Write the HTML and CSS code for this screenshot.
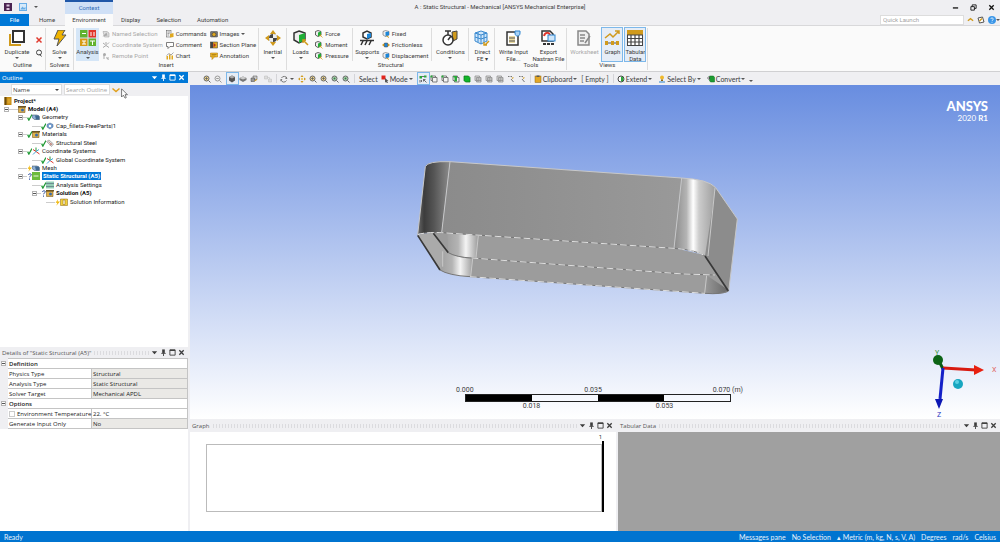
FILE: index.html
```html
<!DOCTYPE html>
<html lang="en">

<head>
  <meta charset="UTF-8">
  <meta name="viewport" content="width=device-width, initial-scale=1.0">
  <title>A : Static Structural - Mechanical [ANSYS Mechanical Enterprise]</title>
  <link rel="stylesheet" href="styles.css">
</head>

<body>
  <!-- Icon set -->
  <svg class="icon-set" aria-hidden="true">
    <symbol id="app" viewBox="0 0 16 16"><rect width="16" height="16" fill="#4a2350"/><path d="M5 3h6v4H5zM5 14v-4h6v4" fill="#d9c4dc"/></symbol>
    <symbol id="save" viewBox="0 0 16 16"><rect x="1" y="1" width="14" height="14" fill="#d6eafa" stroke="#6aaee6" stroke-width="2"/><path d="M3 12l4-5 3 3 3-2v5H3z" fill="#6aaee6"/></symbol>
    <symbol id="duplicate" viewBox="0 0 16 16"><path d="M1 4v11h11" fill="none" stroke="#d09a1c" stroke-width="2"/><rect x="4" y="1" width="11" height="11" fill="#fff" stroke="#333" stroke-width="2"/></symbol>
    <symbol id="cross" viewBox="0 0 16 16"><path d="M3 3l10 10M13 3L3 13" stroke="#e03a2e" stroke-width="3"/></symbol>
    <symbol id="find" viewBox="0 0 16 16"><circle cx="8" cy="7" r="5" fill="none" stroke="#444" stroke-width="2"/><path d="M9 10l4 5" stroke="#444" stroke-width="2"/></symbol>
    <symbol id="bolt" viewBox="0 0 16 16"><path d="M6 0h7l-3 5h4L5 16l2-7H2z" fill="#f0b400" stroke="#555" stroke-width="1"/></symbol>
    <symbol id="analysis" viewBox="0 0 16 16"><path fill="#62b22f" d="M0 0h7.500v7.500H0zM8.500 8.500H16V16H8.500z"/><path fill="#e0362c" d="M8.500 0H16v7.500H8.500z"/><path fill="#d79b14" d="M0 8.500h7.500V16H0z"/><path d="M2 3.500h4M11 2v4M14 2v4M2 11h4M4 11v3M2 14h4M10 11h5M12.500 11v4" stroke="#fff" fill="none"/></symbol>
    <symbol id="named" viewBox="0 0 16 16"><path d="M2 3h8l4 3v8H5z" fill="#ddd" stroke="#999"/><path d="M1 13l8-8 2 6z" fill="#aaa"/></symbol>
    <symbol id="axes-grey" viewBox="0 0 16 16"><path d="M8 9V2M8 9l6 4M8 9l-6 4M2 4l4 3M14 3l-4 4" stroke="#aaa" stroke-width="2" fill="none"/></symbol>
    <symbol id="remote" viewBox="0 0 16 16"><circle cx="5" cy="5" r="3" fill="#aaa"/><path d="M4 14V6M8 11l5 4M12 10v5" stroke="#aaa" stroke-width="2"/></symbol>
    <symbol id="commands" viewBox="0 0 16 16"><rect x="1" y="1" width="9" height="13" fill="#eee" stroke="#555"/><path d="M3 4h5M3 7h4M3 10h3" stroke="#555"/><path d="M8 8l7-2v8l-7 1z" fill="#e0a81f"/></symbol>
    <symbol id="comment" viewBox="0 0 16 16"><path d="M1 3h14v8H8l-4 4v-4H1z" fill="#fff" stroke="#555" stroke-width="1.500"/></symbol>
    <symbol id="chart" viewBox="0 0 16 16"><path d="M1 15V8h3v7M6 15V5h3v10M11 15v-8h3v8" fill="#e0a81f"/><path d="M1 7l5-4 4 3 5-5" fill="none" stroke="#555"/></symbol>
    <symbol id="images" viewBox="0 0 16 16"><rect x="1" y="3" width="14" height="11" rx="1" fill="#777" stroke="#444"/><circle cx="8" cy="9" r="4" fill="#e0a81f" stroke="#333"/></symbol>
    <symbol id="section" viewBox="0 0 16 16"><rect x="1" y="2" width="14" height="12" fill="#e0a81f" stroke="#333"/><path d="M1 2h5v12H1z" fill="#444"/><path d="M7 4l5 4-5 5z" fill="#b02a20"/></symbol>
    <symbol id="note" viewBox="0 0 16 16"><path d="M1 2h14v8H9l-5 5v-5H1z" fill="#f2bd2c" stroke="#a36b00"/><path d="M3 5h10M3 8h8" stroke="#7a5200"/></symbol>
    <symbol id="inertial" viewBox="0 0 16 16"><path d="M8 0l3 4H5zM8 16l3-4H5zM0 8l4-3v6zM16 8l-4-3v6z" fill="#d09a1c"/><circle cx="8" cy="8" r="4" fill="#444"/><path d="M8 4a4 4 0 0 1 4 4H8zM8 12a4 4 0 0 1-4-4h4z" fill="#eee"/></symbol>
    <symbol id="loads" viewBox="0 0 16 16"><path d="M6 1l6 2v7l-6 3-5-3V3z" fill="#eee" stroke="#333" stroke-width="1.500"/><path d="M6 5l6-2v7l-6 3z" fill="#1fae36"/><path d="M10 10l5 5M10 13v-3h3" stroke="#d09a1c" stroke-width="1.500" fill="none"/></symbol>
    <symbol id="supports" viewBox="0 0 16 16"><path d="M4 7V3l4-2 4 2v4l-4 2z" fill="#fff" stroke="#333" stroke-width="1.500"/><path d="M8 4l4-1v4L8 9z" fill="#1c86d8"/><path d="M1 10.500h14M4 11l-2 4M8 11l-2 4M12 11l-2 4" stroke="#333" stroke-width="1.500"/></symbol>
    <symbol id="fixed" viewBox="0 0 16 16"><path d="M7 1l7 2v7l-7 3-5-3V3z" fill="#eee" stroke="#444"/><path d="M7 4l7-1v7l-7 3z" fill="#1c86d8"/><path d="M9 12l5 3" stroke="#d09a1c" stroke-width="2"/></symbol>
    <symbol id="slide" viewBox="0 0 16 16"><path d="M0 8l5-4v8zM16 8l-5-4v8z" fill="#d09a1c"/><path d="M5 4h6v8H5z" fill="#1c86d8" stroke="#444"/></symbol>
    <symbol id="conditions" viewBox="0 0 16 16"><path d="M10 2l5-1v8l-4 2z" fill="#d09a1c" stroke="#444"/><circle cx="6" cy="10" r="5" fill="#fff" stroke="#333" stroke-width="1.500"/><path d="M3 1h6M6 1v4M6 10l3-4" stroke="#333" stroke-width="1.500"/></symbol>
    <symbol id="mesh" viewBox="0 0 16 16"><path d="M7 1l6 2v8l-6 3-6-3V3z" fill="#cfe6fa" stroke="#3b8ad0"/><path d="M1 3l6 2 6-2M7 5v9M1 7l6 2 6-2M4 2v10M10 2v10" stroke="#3b8ad0" fill="none"/><path d="M15 11l-4 4M10 12v3h3" stroke="#d09a1c" stroke-width="1.500" fill="none"/></symbol>
    <symbol id="write" viewBox="0 0 16 16"><path d="M2 2h8l3 3v10H2z" fill="#fff" stroke="#333" stroke-width="1.500"/><path d="M4 6h6v7H4z" fill="#e9d9a0"/><path d="M4 8h6M4 11h6" stroke="#555"/><path d="M10 1h5v2c0 2-1 3-2.500 3S10 5 10 3z" fill="#a9d2f4" stroke="#2b83cf"/></symbol>
    <symbol id="export" viewBox="0 0 16 16"><path d="M2 1h8l3 3v7H2z" fill="#fff" stroke="#333" stroke-width="1.500"/><path d="M4 6c1-4 5-4 6-1" stroke="#e0362c" stroke-width="2" fill="none"/><rect x="8" y="5" width="7" height="6" fill="#cfe6fa" stroke="#2b83cf"/><path d="M3 14h12" stroke="#333" stroke-width="2" stroke-dasharray="3 1"/></symbol>
    <symbol id="worksheet" viewBox="0 0 16 16"><path d="M2 1h8l3 3v11H2z" fill="#eee" stroke="#888" stroke-width="1.500"/><path d="M4 5h5M4 8h5M4 11h4M14 6l-5 7" stroke="#888" stroke-width="1.500"/></symbol>
    <symbol id="graph" viewBox="0 0 16 16"><path d="M1 8l5-4 3 3 6-6M11 1h4v3" fill="none" stroke="#d09a1c" stroke-width="1.500"/><path d="M1 13h14" stroke="#555"/><path d="M1 11h3v4H1zM7 11h3v4H7zM12 11h3v4h-3z" fill="#d09a1c"/></symbol>
    <symbol id="table" viewBox="0 0 16 16"><rect x=".500" y=".500" width="15" height="15" fill="#fff" stroke="#444"/><path d="M0 0h16v5H0z" fill="#d09a1c"/><path d="M0 5h16M0 8.500h16M0 12h16M4 5v11M8 5v11M12 5v11" stroke="#444" stroke-width="1.200"/></symbol>
    <symbol id="zoom-in" viewBox="0 0 16 16"><circle cx="7" cy="7" r="5" fill="#f5d98a" stroke="#666" stroke-width="2"/><path d="M11 11l4 4M4.500 7h5M7 4.500v5" stroke="#666" stroke-width="2"/></symbol>
    <symbol id="zoom-grey" viewBox="0 0 16 16"><circle cx="7" cy="7" r="5" fill="#eee" stroke="#999" stroke-width="2"/><path d="M11 11l4 4M4.500 7h5" stroke="#999" stroke-width="2"/></symbol>
    <symbol id="zoom-green" viewBox="0 0 16 16"><circle cx="7" cy="7" r="5" fill="#bde2bd" stroke="#666" stroke-width="2"/><path d="M5 5h4v4H5z" fill="#3a7a48"/><path d="M11 11l4 4" stroke="#666" stroke-width="2"/></symbol>
    <symbol id="cube" viewBox="0 0 16 16"><path d="M8 1l6 3v7l-6 4-6-4V4z" fill="#555"/><path d="M8 1l6 3-6 3-6-3z" fill="#aaa"/></symbol>
    <symbol id="cube-flat" viewBox="0 0 16 16"><path d="M8 3l7 3v4l-7 4-7-4V6z" fill="#777"/><path d="M8 3l7 3-7 3-7-3z" fill="#ccc"/></symbol>
    <symbol id="cubes" viewBox="0 0 16 16"><path d="M6 2h8v7H6z" fill="#ccc" stroke="#444"/><path d="M2 6h7v7H2z" fill="#999" stroke="#444"/><path d="M9 12l5-3" stroke="#d09a1c" stroke-width="2"/></symbol>
    <symbol id="copy-grey" viewBox="0 0 16 16"><path d="M1 2h6v6H1zM9 8h6v6H9z" fill="#ddd" stroke="#bbb"/><path d="M7 5h4v3" stroke="#bbb" fill="none"/></symbol>
    <symbol id="rotate" viewBox="0 0 16 16"><path d="M3 6a6 6 0 0 1 11 1M13 11a6 6 0 0 1-11-1" fill="none" stroke="#777" stroke-width="2"/><path d="M14 3v5h-4zM1 13V8h4z" fill="#777"/></symbol>
    <symbol id="pan" viewBox="0 0 16 16"><path d="M8 0l3 4H5zM8 16l3-4H5zM0 8l4-3v6zM16 8l-4-3v6z" fill="#d09a1c"/><path d="M6 6h4v4H6z" fill="#eacb6b"/></symbol>
    <symbol id="pointer-red" viewBox="0 0 16 16"><path d="M1 1h8v8H1z" fill="#e0241c"/><path d="M8 6l7 6-3 .500 2 3-2 1-2-3-2 2z" fill="#555"/></symbol>
    <symbol id="pick" viewBox="0 0 16 16"><path d="M1 2h5v5H1zM10 1h5v4h-5z" fill="#2aa83a"/><path d="M6 3h4M2 10v5M5 10v4M9 9l6 6M9 13V9h4" stroke="#444" stroke-width="1.500" fill="none"/></symbol>
    <symbol id="sel-vertex" viewBox="0 0 16 16"><path d="M2 2h9v3h3v9H5v-3H2zM5 5h6M5 5v6" fill="#f4f4f4" stroke="#555" stroke-width="1.500"/><path d="M1 1h4v4H1z" fill="#2aa83a"/></symbol>
    <symbol id="sel-face" viewBox="0 0 16 16"><path d="M2 2h9v3h3v9H5v-3H2z" fill="#f4f4f4" stroke="#555" stroke-width="1.500"/><path d="M5 5h5v8H5zM2 2h8v3H3z" fill="#2aa83a"/></symbol>
    <symbol id="sel-body" viewBox="0 0 16 16"><path d="M2 2h9l3 3v9H5l-3-3z" fill="#12b52a" stroke="#0b7a1a" stroke-width="1.500"/></symbol>
    <symbol id="sel-node" viewBox="0 0 16 16"><path d="M2 2h9v3h3v9H5v-3H2zM5 5h6M5 5v6M8 8h6M8 5v9M5 11h9" fill="#ddd" stroke="#888" stroke-width="1.500"/></symbol>
    <symbol id="probe" viewBox="0 0 16 16"><path d="M2 3h3M7 3h3M8 8l5 6" stroke="#777" stroke-width="2"/><path d="M9 5h5l-3 3z" fill="#d09a1c"/></symbol>
    <symbol id="clipboard" viewBox="0 0 16 16"><rect x="2" y="2" width="12" height="13" fill="#e3a726" stroke="#8a6310"/><path d="M5 1h6v3H5z" fill="#555"/></symbol>
    <symbol id="extend" viewBox="0 0 16 16"><circle cx="8" cy="8" r="6" fill="#fff" stroke="#444" stroke-width="2"/><path d="M8 3a5 5 0 0 1 0 10z" fill="#2aa83a"/></symbol>
    <symbol id="select-by" viewBox="0 0 16 16"><circle cx="8" cy="5" r="4" fill="#f0b92c"/><path d="M6 9h4v3H6z" fill="#8a6310"/><path d="M2 14h12" stroke="#2b83cf" stroke-width="2"/></symbol>
    <symbol id="convert" viewBox="0 0 16 16"><path d="M5 2h8l2 3v9H7l-2-3z" fill="#1d9c33" stroke="#0b6a1a"/><path d="M0 6h6M3 3l3 3-3 3" stroke="#444" fill="none" stroke-width="1.500"/></symbol>
    <symbol id="project" viewBox="0 0 16 16"><path d="M1 0h14v16H1z" fill="#c58a12"/><path d="M1 0h4v16H1z" fill="#6b4b0a"/><path d="M7 3h6v10H7z" fill="#dba52c"/></symbol>
    <symbol id="box" viewBox="0 0 16 16"><path d="M1 4h13v11H1z" fill="#e0b04a" stroke="#6b4b0a"/><path d="M0 2h16v3H0z" fill="#6b5424"/><circle cx="9" cy="10" r="3" fill="#3d6da8"/></symbol>
    <symbol id="geometry" viewBox="0 0 16 16"><path d="M0 4h10l5 3v6H5L0 9z" fill="#8fb0d6" stroke="#345"/><path d="M6 5h8v8H8z" fill="#40688f"/></symbol>
    <symbol id="part" viewBox="0 0 16 16"><path d="M8 2l6 3v5l-6 4-6-4V5z" fill="#7ba3d4" stroke="#3b5c86"/><path d="M6 6h4v4H6z" fill="#fff"/></symbol>
    <symbol id="steel" viewBox="0 0 16 16"><path d="M1 5l5-3 9 8-4 5z" fill="#ddd" stroke="#777"/><path d="M5 5l7 7M11 8l-3 5" stroke="#b04a3a"/></symbol>
    <symbol id="axes" viewBox="0 0 16 16"><path d="M8 9V1" stroke="#2a9a3a" stroke-width="2"/><path d="M8 9l7 5M8 9L2 5" stroke="#e0362c" stroke-width="2"/><path d="M8 9l-6 6M8 9l6-4" stroke="#3fa7d8" stroke-width="2"/></symbol>
    <symbol id="static" viewBox="0 0 16 16"><rect width="16" height="16" fill="#6cbb3c"/><path d="M3 8h10" stroke="#e8f5df" stroke-width="2"/></symbol>
    <symbol id="settings" viewBox="0 0 16 16"><path d="M2 1v14M6 1v14M10 1v14M14 1v14" stroke="#2a9a6a" stroke-width="2"/><path d="M0 5h16M0 11h16" stroke="#44506a" stroke-width="1"/></symbol>
    <symbol id="info" viewBox="0 0 16 16"><path d="M1 2h14v13H1z" fill="#f3d23c" stroke="#8a6310"/><path d="M6 4h4v9H6z" fill="#fffbe0" stroke="#8a6310"/></symbol>
    <symbol id="check" viewBox="0 0 8 12"><path d="M1 7l2 4 5-9" fill="none" stroke="#1f9a35" stroke-width="2"/></symbol>
    <symbol id="spark" viewBox="0 0 8 12"><path d="M5 1L1 7h3l-2 5 6-7H4z" fill="#f0b400"/></symbol>
    <symbol id="ask" viewBox="0 0 8 12"><path d="M2 4c1-2 5-2 5 0S4 6 4 8M4 10v2" fill="none" stroke="#274a9a" stroke-width="1.500"/></symbol>
    <symbol id="pin" viewBox="0 0 16 16"><path d="M5 1h6v8H5z" fill="currentColor"/><path d="M3 10h10M8 10v6" stroke="currentColor" stroke-width="2"/></symbol>
    <symbol id="frame" viewBox="0 0 16 16"><path d="M2 2h12v12H2z" fill="none" stroke="currentColor" stroke-width="2"/><path d="M2 3h12" stroke="currentColor" stroke-width="3"/></symbol>
    <symbol id="close" viewBox="0 0 16 16"><path d="M3 3l10 10M13 3L3 13" stroke="currentColor" stroke-width="3"/></symbol>
    <symbol id="min" viewBox="0 0 16 16"><path d="M2 9h12" stroke="currentColor" stroke-width="3"/></symbol>
    <symbol id="restore" viewBox="0 0 16 16"><path d="M2 6h8v8H2zM5 6V2h9v8h-4" fill="none" stroke="currentColor" stroke-width="2"/></symbol>
    <symbol id="drop" viewBox="0 0 16 16"><path d="M2 5h12l-6 7z" fill="currentColor"/></symbol>
    <symbol id="up" viewBox="0 0 16 16"><path d="M2 11l6-5 6 5" fill="none" stroke="#d09a1c" stroke-width="3"/></symbol>
    <symbol id="down" viewBox="0 0 16 16"><path d="M1 5l7 6 7-6" fill="none" stroke="#e0a01c" stroke-width="3"/></symbol>
    <symbol id="layout" viewBox="0 0 16 16"><path d="M2 4l9-2 3 10-9 2z" fill="#fff" stroke="#555" stroke-width="2"/><path d="M5 10l5-5" stroke="#d09a1c" stroke-width="3"/></symbol>
    <symbol id="help" viewBox="0 0 16 16"><circle cx="8" cy="8" r="8" fill="#3a96e8"/><path d="M5.500 6c0-3 5-3 5 0S8 8 8 10M8 11.500v2" fill="none" stroke="#fff" stroke-width="1.500"/></symbol>
  </svg>

  <div class="app">
    <!-- Title bar and tabs -->
    <header class="top">
      <div class="title-bar">
        <div class="quick">
          <svg class="ic"><use href="#app"/></svg>
          <button aria-label="Save"><svg class="ic"><use href="#save"/></svg></button>
          <button class="caret" aria-label="More"></button>
        </div>
        <div class="context-label">Context</div>
        <h1>A : Static Structural - Mechanical [ANSYS Mechanical Enterprise]</h1>
        <div class="window-buttons">
          <button aria-label="Minimize"><svg class="ic-s"><use href="#min"/></svg></button>
          <button aria-label="Restore"><svg class="ic-s"><use href="#restore"/></svg></button>
          <button aria-label="Close"><svg class="ic-s"><use href="#close"/></svg></button>
        </div>
      </div>
      <div class="tab-bar">
        <nav class="tabs">
          <button class="file">File</button>
          <button class="home">Home</button>
          <button class="active">Environment</button>
          <button>Display</button>
          <button>Selection</button>
          <button>Automation</button>
        </nav>
        <div class="launch">
          <input type="text" placeholder="Quick Launch" aria-label="Quick Launch">
          <button aria-label="Collapse ribbon"><svg class="ic-s"><use href="#up"/></svg></button>
          <button aria-label="Layout"><svg class="ic"><use href="#layout"/></svg></button>
          <button aria-label="Help"><svg class="ic"><use href="#help"/></svg><span class="caret"></span></button>
        </div>
      </div>
    </header>

    <!-- Ribbon -->
    <div class="ribbon">
      <section class="group">
        <div class="tools">
          <button class="big"><svg><use href="#duplicate"/></svg>Duplicate<span class="caret"></span></button>
          <div class="list mini">
            <button aria-label="Delete"><svg class="ic"><use href="#cross"/></svg></button>
            <button aria-label="Find"><svg class="ic"><use href="#find"/></svg></button>
          </div>
        </div>
        <h2>Outline</h2>
      </section>
      <section class="group">
        <div class="tools">
          <button class="big narrow"><svg><use href="#bolt"/></svg>Solve<span class="caret"></span></button>
        </div>
        <h2>Solvers</h2>
      </section>
      <section class="group">
        <div class="tools">
          <button class="big narrow lit"><svg><use href="#analysis"/></svg>Analysis<span class="caret"></span></button>
          <div class="list">
            <button disabled><svg class="ic"><use href="#named"/></svg>Named Selection</button>
            <button disabled><svg class="ic"><use href="#axes-grey"/></svg>Coordinate System</button>
            <button disabled><svg class="ic"><use href="#remote"/></svg>Remote Point</button>
          </div>
          <div class="list">
            <button><svg class="ic"><use href="#commands"/></svg>Commands</button>
            <button><svg class="ic"><use href="#comment"/></svg>Comment</button>
            <button><svg class="ic"><use href="#chart"/></svg>Chart</button>
          </div>
          <div class="list">
            <button><svg class="ic"><use href="#images"/></svg>Images<span class="caret"></span></button>
            <button><svg class="ic"><use href="#section"/></svg>Section Plane</button>
            <button><svg class="ic"><use href="#note"/></svg>Annotation</button>
          </div>
        </div>
        <h2>Insert</h2>
      </section>
      <section class="group">
        <div class="tools">
          <button class="big narrow"><svg><use href="#inertial"/></svg>Inertial<span class="caret"></span></button>
        </div>
      </section>
      <section class="group">
        <div class="tools">
          <button class="big narrow"><svg><use href="#loads"/></svg>Loads<span class="caret"></span></button>
          <div class="list">
            <button><svg class="ic"><use href="#loads"/></svg>Force</button>
            <button><svg class="ic"><use href="#loads"/></svg>Moment</button>
            <button><svg class="ic"><use href="#loads"/></svg>Pressure</button>
          </div>
          <div class="split"></div>
          <button class="big narrow"><svg><use href="#supports"/></svg>Supports<span class="caret"></span></button>
          <div class="list">
            <button><svg class="ic"><use href="#fixed"/></svg>Fixed</button>
            <button><svg class="ic"><use href="#slide"/></svg>Frictionless</button>
            <button><svg class="ic"><use href="#fixed"/></svg>Displacement</button>
          </div>
          <div class="split"></div>
          <button class="big"><svg><use href="#conditions"/></svg>Conditions<span class="caret"></span></button>
          <div class="split"></div>
          <button class="big slim"><svg><use href="#mesh"/></svg>Direct<br>FE ▾</button>
        </div>
        <h2>Structural</h2>
      </section>
      <section class="group">
        <div class="tools">
          <button class="big wide"><svg><use href="#write"/></svg>Write Input<br>File...</button>
          <button class="big wide"><svg><use href="#export"/></svg>Export<br>Nastran File</button>
        </div>
        <h2>Tools</h2>
      </section>
      <section class="group">
        <div class="tools">
          <button class="big" disabled><svg><use href="#worksheet"/></svg>Worksheet</button>
          <button class="big slim on"><svg><use href="#graph"/></svg>Graph</button>
          <button class="big slim on"><svg><use href="#table"/></svg>Tabular<br>Data</button>
        </div>
        <h2>Views</h2>
      </section>
    </div>

    <main class="work">
      <div class="side">
        <!-- Outline -->
        <section class="outline">
          <div class="panel-head blue">
            <h3>Outline</h3>
            <span class="fill"></span>
            <button aria-label="Menu"><svg class="ic-s"><use href="#drop"/></svg></button>
            <button aria-label="Pin"><svg class="ic-s"><use href="#pin"/></svg></button>
            <button aria-label="Maximize"><svg class="ic-s"><use href="#frame"/></svg></button>
            <button aria-label="Close"><svg class="ic-s"><use href="#close"/></svg></button>
          </div>
          <div class="search">
            <span class="grip"></span>
            <label class="picker"><select aria-label="Search by"><option>Name</option></select></label>
            <input type="text" placeholder="Search Outline" aria-label="Search Outline">
            <button aria-label="Expand"><svg class="ic"><use href="#down"/></svg></button>
          </div>
          <div class="tree">
            <div class="row root"><svg class="ic"><use href="#project"/></svg><b>Project*</b></div>
            <ul>
              <li>
                <div class="row"><i class="toggle"></i><i class="wire"></i><svg class="ic"><use href="#box"/></svg><b>Model (A4)</b></div>
                <ul>
                  <li>
                    <div class="row"><i class="toggle"></i><i class="wire"></i><svg class="st"><use href="#check"/></svg><svg class="ic"><use href="#geometry"/></svg><span>Geometry</span></div>
                    <ul>
                      <li><div class="row"><i class="wire leaf"></i><svg class="st"><use href="#check"/></svg><svg class="ic"><use href="#part"/></svg><span>Cap_fillets-FreeParts|1</span></div></li>
                    </ul>
                  </li>
                  <li>
                    <div class="row"><i class="toggle"></i><i class="wire"></i><svg class="st"><use href="#check"/></svg><svg class="ic"><use href="#box"/></svg><span>Materials</span></div>
                    <ul>
                      <li><div class="row"><i class="wire leaf"></i><svg class="st"><use href="#check"/></svg><svg class="ic"><use href="#steel"/></svg><span>Structural Steel</span></div></li>
                    </ul>
                  </li>
                  <li>
                    <div class="row"><i class="toggle"></i><i class="wire"></i><svg class="st"><use href="#check"/></svg><svg class="ic"><use href="#axes"/></svg><span>Coordinate Systems</span></div>
                    <ul>
                      <li><div class="row"><i class="wire leaf"></i><svg class="st"><use href="#check"/></svg><svg class="ic"><use href="#axes"/></svg><span>Global Coordinate System</span></div></li>
                    </ul>
                  </li>
                  <li><div class="row"><i class="wire leaf"></i><svg class="st"><use href="#spark"/></svg><svg class="ic"><use href="#geometry"/></svg><span>Mesh</span></div></li>
                  <li>
                    <div class="row"><i class="toggle"></i><i class="wire"></i><svg class="st"><use href="#ask"/></svg><svg class="ic"><use href="#static"/></svg><b class="selected">Static Structural (A5)</b></div>
                    <ul>
                      <li><div class="row"><i class="wire leaf"></i><svg class="st"><use href="#check"/></svg><svg class="ic"><use href="#settings"/></svg><span>Analysis Settings</span></div></li>
                      <li>
                        <div class="row"><i class="toggle"></i><i class="wire"></i><svg class="st"><use href="#ask"/></svg><svg class="ic"><use href="#box"/></svg><b>Solution (A5)</b></div>
                        <ul>
                          <li><div class="row"><i class="wire leaf"></i><svg class="st"><use href="#spark"/></svg><svg class="ic"><use href="#info"/></svg><span>Solution Information</span></div></li>
                        </ul>
                      </li>
                    </ul>
                  </li>
                </ul>
              </li>
            </ul>
          </div>
          <svg class="mouse" viewBox="0 0 12 18"><path d="M1 1v14l3-3 3 5 2-1-2-5h4z" fill="#fff" stroke="#222"/></svg>
        </section>

        <!-- Details -->
        <section class="details">
          <div class="panel-head">
            <h3>Details of "Static Structural (A5)"</h3>
            <span class="fill"></span>
            <button aria-label="Menu"><svg class="ic-s"><use href="#drop"/></svg></button>
            <button aria-label="Pin"><svg class="ic-s"><use href="#pin"/></svg></button>
            <button aria-label="Maximize"><svg class="ic-s"><use href="#frame"/></svg></button>
            <button aria-label="Close"><svg class="ic-s"><use href="#close"/></svg></button>
          </div>
          <table>
            <colgroup><col class="col-gutter"><col class="col-name"><col></colgroup>
            <tr><td class="gutter"><i class="toggle"></i></td><th colspan="2">Definition</th></tr>
            <tr><td class="gutter"></td><td>Physics Type</td><td class="locked">Structural</td></tr>
            <tr><td class="gutter"></td><td>Analysis Type</td><td class="locked">Static Structural</td></tr>
            <tr><td class="gutter"></td><td>Solver Target</td><td class="locked">Mechanical APDL</td></tr>
            <tr><td class="gutter"><i class="toggle"></i></td><th colspan="2">Options</th></tr>
            <tr><td class="gutter"></td><td><label><input type="checkbox">Environment Temperature</label></td><td>22. °C</td></tr>
            <tr><td class="gutter"></td><td>Generate Input Only</td><td class="locked">No</td></tr>
          </table>
        </section>
      </div>

      <div class="stage">
        <!-- Graphics toolbar -->
        <div class="toolbar">
          <span class="grip"></span>
          <button aria-label="Zoom in"><svg class="ic"><use href="#zoom-in"/></svg></button>
          <button aria-label="Zoom out"><svg class="ic"><use href="#zoom-grey"/></svg></button>
          <button class="on gap" aria-label="Shaded"><svg class="ic"><use href="#cube"/></svg></button>
          <button aria-label="Wireframe"><svg class="ic"><use href="#cube-flat"/></svg></button>
          <button aria-label="Show mesh"><svg class="ic"><use href="#cubes"/></svg></button>
          <button class="gap" aria-label="Copy"><svg class="ic"><use href="#copy-grey"/></svg></button>
          <span class="rule"></span>
          <button aria-label="Rotate"><svg class="ic"><use href="#rotate"/></svg></button>
          <span class="caret"></span>
          <button class="gap" aria-label="Pan"><svg class="ic"><use href="#pan"/></svg></button>
          <button aria-label="Zoom"><svg class="ic"><use href="#zoom-in"/></svg></button>
          <button aria-label="Box zoom"><svg class="ic"><use href="#zoom-in"/></svg></button>
          <button aria-label="Fit"><svg class="ic"><use href="#zoom-green"/></svg></button>
          <button aria-label="Magnifier"><svg class="ic"><use href="#zoom-green"/></svg></button>
          <span class="rule"></span>
          <span class="word">Select</span>
          <button><svg class="ic"><use href="#pointer-red"/></svg>Mode<span class="caret"></span></button>
          <button class="on gap" aria-label="Single select"><svg class="ic"><use href="#pick"/></svg></button>
          <button aria-label="Vertex"><svg class="ic"><use href="#sel-vertex"/></svg></button>
          <button aria-label="Edge"><svg class="ic"><use href="#sel-vertex"/></svg></button>
          <button aria-label="Face"><svg class="ic"><use href="#sel-face"/></svg></button>
          <button aria-label="Body"><svg class="ic"><use href="#sel-body"/></svg></button>
          <button aria-label="Node"><svg class="ic"><use href="#sel-node"/></svg></button>
          <button aria-label="Element face"><svg class="ic"><use href="#sel-node"/></svg></button>
          <button aria-label="Element"><svg class="ic"><use href="#sel-node"/></svg></button>
          <button aria-label="Hit point"><svg class="ic"><use href="#probe"/></svg></button>
          <button aria-label="Coordinates"><svg class="ic"><use href="#probe"/></svg></button>
          <span class="rule"></span>
          <button><svg class="ic"><use href="#clipboard"/></svg>Clipboard<span class="caret"></span></button>
          <span class="word">[ Empty ]</span>
          <span class="rule"></span>
          <button><svg class="ic"><use href="#extend"/></svg>Extend<span class="caret"></span></button>
          <button class="gap"><svg class="ic"><use href="#select-by"/></svg>Select By<span class="caret"></span></button>
          <button class="gap"><svg class="ic"><use href="#convert"/></svg>Convert<span class="caret"></span></button>
          <span class="caret last"></span>
        </div>

        <!-- 3D view -->
        <div class="view">
          <svg class="model" viewBox="0 0 1050 465">
            <defs>
              <linearGradient id="left-round"><stop offset="0" stop-color="#6a6a6a"/><stop offset=".2" stop-color="#3c3c3c"/><stop offset=".5" stop-color="#555"/><stop offset="1" stop-color="#8c8c8c"/></linearGradient>
              <linearGradient id="front"><stop offset="0" stop-color="#8b8b8b"/><stop offset="1" stop-color="#999"/></linearGradient>
              <linearGradient id="right-round"><stop offset="0" stop-color="#8a8a8a"/><stop offset=".3" stop-color="#b4b4b4"/><stop offset=".46" stop-color="#fff"/><stop offset=".6" stop-color="#ccc"/><stop offset="1" stop-color="#9c9c9c"/></linearGradient>
              <linearGradient id="in-round"><stop offset="0" stop-color="#a0a0a0"/><stop offset=".35" stop-color="#b4b4b4"/><stop offset=".6" stop-color="#f4f4f4"/><stop offset="1" stop-color="#999"/></linearGradient>
              <linearGradient id="in-right"><stop offset="0" stop-color="#999"/><stop offset="1" stop-color="#666"/></linearGradient>
            </defs>
            <path d="M53 254L125 246L820 293L915 316L985 425Q965 434 915 430L210 380Q145 376 120 360z" fill="#9c9c9c"/>
            <path d="M53 254L100 248L145 308L128 355L120 360z" fill="#aaa"/>
            <path d="M142 248L235 254L228 324Q170 322 145 308z" fill="url(#in-round)"/>
            <path d="M132 304Q170 324 220 326L212 381Q145 376 122 360z" fill="url(#in-round)"/>
            <path d="M920 376L985 420Q970 434 914 430z" fill="url(#in-right)"/>
            <path d="M76 50Q82 33 150 35L125 248Q75 246 53 252z" fill="url(#left-round)"/>
            <path d="M150 35L845 84L822 295L125 248z" fill="url(#front)"/>
            <path d="M845 84Q925 88 947 113L922 322Q890 300 822 295z" fill="url(#right-round)"/>
            <path d="M947 113L1012 207L986 424L915 318z" fill="#8c8c8c"/>
            <path class="edge" d="M76 50Q82 33 150 35L845 84Q925 88 947 113L1012 207L986 424M76 50L53 254M150 35L125 248M845 84L822 295M945 113L924 318M235 256L228 324M218 326L212 380M128 304L128 350M920 376L914 430"/>
            <path class="dark" d="M53 256L120 360M100 250L145 308M915 318L985 423"/>
            <path class="dark thin" d="M120 360Q145 376 210 380L915 430Q965 434 985 423M145 308Q170 322 215 324L850 372L945 375M53 254Q75 246 125 248L822 295Q890 300 915 318"/>
            <path class="edge dash" d="M53 254Q75 246 125 248L822 295Q890 300 915 318M215 324L850 372L945 375M210 380L915 430"/>
          </svg>
          <div class="brand"><strong>ANSYS</strong><span>2020 <b>R1</b></span></div>
          <div class="ruler">
            <div class="marks upper"><span>0.000</span><span>0.035</span><span>0.070 (m)</span></div>
            <div class="bar"><i></i><i></i><i></i><i></i></div>
            <div class="marks lower"><span>0.018</span><span>0.053</span></div>
          </div>
          <svg class="triad" viewBox="0 0 70 70">
            <path d="M13 20L9 12" stroke="#0a5a14" stroke-width="3"/>
            <circle cx="8" cy="11" r="5" fill="#0c6416"/>
            <path d="M13 19L46 21" stroke="#d81a10" stroke-width="3"/>
            <path d="M44 16l10 5-10 5z" fill="#e8200f"/>
            <path d="M13 19L10 50" stroke="#1420c8" stroke-width="3"/>
            <path d="M5 50h8l-4 10z" fill="#0c17b4"/>
            <circle cx="28" cy="35" r="5" fill="#17a6c0"/>
            <circle cx="27" cy="33" r="2" fill="#5cd0e2"/>
            <text x="5" y="6" fill="#3a9a3a">Y</text>
            <text x="62" y="23" fill="#e0605a">X</text>
            <text x="7" y="68" fill="#2a34c0">Z</text>
          </svg>
        </div>

        <!-- Graph and tabular data -->
        <div class="bottom">
          <section class="graph-panel">
            <div class="panel-head">
              <h3>Graph</h3>
              <span class="fill"></span>
              <button aria-label="Menu"><svg class="ic-s"><use href="#drop"/></svg></button>
              <button aria-label="Pin"><svg class="ic-s"><use href="#pin"/></svg></button>
              <button aria-label="Maximize"><svg class="ic-s"><use href="#frame"/></svg></button>
              <button aria-label="Close"><svg class="ic-s"><use href="#close"/></svg></button>
            </div>
            <div class="plot-area">
              <span>1</span>
              <div class="plot"></div>
            </div>
          </section>
          <section class="data-panel">
            <div class="panel-head">
              <h3>Tabular Data</h3>
              <span class="fill"></span>
              <button aria-label="Menu"><svg class="ic-s"><use href="#drop"/></svg></button>
              <button aria-label="Pin"><svg class="ic-s"><use href="#pin"/></svg></button>
              <button aria-label="Maximize"><svg class="ic-s"><use href="#frame"/></svg></button>
              <button aria-label="Close"><svg class="ic-s"><use href="#close"/></svg></button>
            </div>
            <div class="data-area"></div>
          </section>
        </div>
      </div>
    </main>

    <!-- Status bar -->
    <footer class="status">
      <span class="ready">Ready</span>
      <span>Messages pane</span>
      <span>No Selection</span>
      <span class="units">Metric (m, kg, N, s, V, A)</span>
      <span>Degrees</span>
      <span>rad/s</span>
      <span>Celsius</span>
    </footer>
  </div>
</body>

</html>
```
FILE: styles.css
```css
* {
  box-sizing: border-box;
}

body {
  margin: 0;
  font-family: Roboto, "Noto Sans", sans-serif;
  font-size: 6px;
  line-height: 8px;
  color: #3c3c3c;
  background: #fff;
}

h1, h2, h3, ul {
  margin: 0;
  padding: 0;
  font-size: 6px;
  font-weight: normal;
}

ul {
  list-style: none;
}

button, input, select {
  font: inherit;
  color: inherit;
  margin: 0;
  padding: 0;
  border: none;
  border-radius: 0;
  background: none;
}

button {
  display: flex;
  align-items: center;
  white-space: nowrap;
}

svg {
  flex: none;
  display: block;
}

.icon-set {
  position: absolute;
  width: 0;
  height: 0;
}

.ic {
  width: 8px;
  height: 8px;
}

.ic-s {
  width: 7px;
  height: 7px;
}

.caret {
  border: 2px solid transparent;
  border-top-color: #555;
  border-bottom: none;
  width: 4px;
  height: 2px;
}

.app {
  display: flex;
  flex-direction: column;
  height: 100vh;
  overflow: hidden;
}

/* Title bar */
.top {
  background: #efeff2;
}

.title-bar {
  display: flex;
  align-items: center;
  height: 14px;
}

.quick {
  display: flex;
  align-items: center;
  gap: 4px;
  width: 65px;
  padding-left: 4px;
}

.quick .ic {
  margin-right: 3px;
}

.context-label {
  width: 48px;
  height: 14px;
  line-height: 12px;
  border-top: 2px solid #1f57a8;
  background: #cfe0f6;
  color: #2b6cb8;
  text-align: center;
}

.title-bar h1 {
  flex: 1;
  padding-right: 65px;
  text-align: center;
}

.window-buttons {
  display: flex;
  gap: 11px;
  padding-right: 5px;
  color: #111;
}

.tab-bar {
  display: flex;
  justify-content: space-between;
  height: 12px;
  border-bottom: 1px solid #d8d8da;
}

.tabs {
  display: flex;
}

.tabs button {
  justify-content: center;
  height: 12px;
  padding: 0 8px;
}

.tabs .file {
  width: 29px;
  background: #0078d7;
  color: #fff;
}

.tabs .home {
  width: 36px;
}

.tabs .active {
  width: 48px;
  padding: 0;
  background: #fafafa;
}

.launch {
  display: flex;
  align-items: center;
  gap: 3px;
}

.launch input {
  width: 84px;
  height: 10px;
  padding: 0 2px;
  border: 1px solid #ddd;
  background: #fff;
}

input::placeholder {
  color: #a4a4a4;
}

/* Ribbon */
.ribbon {
  display: flex;
  height: 46px;
  padding-top: 2px;
  background: #fafafa;
  border-bottom: 1px solid #d0d0d2;
}

.group {
  display: flex;
  flex-direction: column;
  height: 42px;
  padding: 0 2px;
  border-right: 1px solid #ddd;
}

.group h2 {
  text-align: center;
}

.tools {
  display: flex;
  gap: 3px;
  height: 33px;
}

.big {
  flex-direction: column;
  width: 30px;
  padding-top: 2px;
  line-height: 7px;
}

.big svg {
  width: 16px;
  height: 16px;
  margin-bottom: 2px;
}

.big .caret {
  margin-top: 2px;
}

.narrow {
  width: 23px;
}

.slim {
  width: 20px;
}

.wide {
  width: 32px;
}

.lit {
  background: #d5e6f7;
}

.on {
  background: #e6edf6;
  outline: 1px solid #7db8ea;
}

button:disabled {
  color: #a8a8a8;
}

.list {
  display: flex;
  flex-direction: column;
}

.list button {
  gap: 2px;
  height: 11px;
}

.mini {
  justify-content: center;
  padding-top: 3px;
}

.mini button {
  height: 13px;
}

.split {
  width: 1px;
  background: #ddd;
}

/* Work area */
.work {
  display: flex;
  flex: 1;
  min-height: 0;
  background: #efeff2;
}

.side {
  display: flex;
  flex-direction: column;
  width: 188px;
  margin-right: 2px;
}

.outline {
  position: relative;
  height: 275px;
  background: #fff;
}

.panel-head {
  display: flex;
  align-items: center;
  gap: 2px;
  height: 11px;
  padding: 0 3px 0 2px;
  background: #efeff2;
  font-family: "Open Sans", "Noto Sans", sans-serif;
}

.panel-head h3 {
  color: #555;
}

.fill {
  flex: 1;
  height: 4px;
  background: radial-gradient(circle, #c4c4c8 25%, transparent 30%) 0 0 / 3px 2px;
}

.panel-head.blue {
  background: #0078d7;
  color: #fff;
}

.blue h3 {
  color: #fff;
}

.blue .fill {
  background: none;
}

.search {
  display: flex;
  align-items: center;
  gap: 2px;
  height: 13px;
  padding-left: 4px;
  background: #efeff2;
}

.grip {
  width: 4px;
  height: 9px;
  background: radial-gradient(circle, #c0c0c4 30%, transparent 35%) 0 0 / 2px 2px;
}

.search select, .search input {
  appearance: none;
  height: 11px;
  padding: 0 1px;
  background: #fff;
  border: 1px solid #ddd;
  font-family: "Open Sans", "Noto Sans", sans-serif;
}

.picker {
  position: relative;
  margin-left: 1px;
}

.picker::after {
  content: "";
  position: absolute;
  top: 5px;
  right: 3px;
  border: 2px solid transparent;
  border-top-color: #444;
  border-bottom: none;
}

.search select {
  display: block;
  width: 51px;
}

.search input {
  width: 46px;
}

/* Tree */
.tree {
  padding-top: 1px;
  padding-left: 4px;
}

.row {
  display: flex;
  align-items: center;
  height: 8px;
  color: #222;
}

.row .ic {
  margin-right: 2px;
}

.row b {
  color: #111;
}

.tree ul ul {
  padding-left: 14px;
}

.tree ul ul ul {
  padding-top: 1px;
}

.toggle {
  display: block;
  width: 5px;
  height: 5px;
  border: 1px solid #b4b4b4;
  background: linear-gradient(#555, #555) center / 3px 1px no-repeat #fff;
}

.wire {
  width: 9px;
  height: 1px;
  background: #ccc;
}

.wire:has(+ .st) {
  width: 4px;
}

.leaf:has(+ .st) {
  width: 9px;
}

.st {
  width: 5px;
  height: 8px;
}

.selected {
  padding: 0 1px;
  background: #0078d7;
}

.row .selected {
  color: #fff;
}

.mouse {
  position: absolute;
  left: 121px;
  top: 16px;
  width: 7px;
  height: 11px;
}

/* Details */
.details {
  flex: 1;
  background: #fff;
}

table {
  width: 100%;
  border-collapse: collapse;
  table-layout: fixed;
  font-family: "Open Sans", "Noto Sans", sans-serif;
}

td, th {
  height: 10px;
  padding: 0 1px;
  border: 1px solid #c4c4c4;
  text-align: left;
  white-space: nowrap;
  line-height: 8px;
  color: #222;
}

th {
  font-weight: 600;
}

.col-gutter {
  width: 7px;
}

.col-name {
  width: 84px;
}

.details .gutter {
  padding: 0;
  border-color: #efeff2;
  background: #efeff2;
}

td.locked {
  background: #eae9e6;
}

td label {
  display: flex;
  align-items: center;
  gap: 2px;
}

td input {
  appearance: none;
  flex: none;
  width: 6px;
  height: 6px;
  border: 1px solid #ccc;
}

/* Right side */
.stage {
  display: flex;
  flex-direction: column;
  flex: 1;
  min-width: 0;
}

.toolbar {
  display: flex;
  align-items: center;
  height: 13px;
  padding-left: 5px;
  font-family: Lato, "Noto Sans", sans-serif;
  font-size: 7px;
}

.toolbar .grip {
  margin-right: 3px;
}

.toolbar button {
  gap: 1px;
  height: 11px;
  padding: 0 2px 0 1px;
}

.toolbar .gap {
  margin-left: 3px;
}

.rule {
  width: 1px;
  height: 9px;
  margin: 0 2px;
  background: #d4d4d8;
}

.word {
  margin: 0 2px;
}

.last {
  margin: 4px 0 0 2px;
}

.view {
  position: relative;
  flex: 1;
  background: linear-gradient(#688de0, #fff);
}

.model {
  position: absolute;
  left: calc(50% - 195px);
  top: 65px;
  width: 350px;
  height: 155px;
}

.edge {
  fill: none;
  stroke: #c8c8c8;
  stroke-width: 3;
}

.dash {
  stroke: #e0e0e0;
  stroke-dasharray: 20 9;
}

.dark {
  fill: none;
  stroke: #383838;
  stroke-width: 5;
}

.thin {
  stroke: #777;
  stroke-width: 3;
}

.brand {
  position: absolute;
  top: 14px;
  right: 12px;
  display: flex;
  flex-direction: column;
  align-items: flex-end;
  color: #fff;
  font-family: Lato, "Noto Sans", sans-serif;
  font-size: 8px;
  line-height: 10px;
}

.brand strong {
  font-size: 13px;
  line-height: 14px;
  font-weight: 900;
}

.ruler {
  position: absolute;
  left: 275px;
  bottom: 9px;
  width: 266px;
  font-size: 7px;
}

.marks {
  display: flex;
}

.upper {
  justify-content: space-between;
  margin: 0 -12px 0 -9px;
}

.lower {
  justify-content: space-around;
}

.bar {
  display: flex;
  height: 8px;
  border: 1px solid #222;
}

.bar i {
  flex: 1;
}

.bar i:nth-child(odd) {
  background: #000;
}

.triad {
  position: absolute;
  right: 0;
  bottom: 0;
  width: 70px;
  height: 70px;
  font-size: 7px;
}

/* Bottom panels */
.bottom {
  display: flex;
  gap: 2px;
  height: 112px;
}

.bottom .panel-head {
  height: 13px;
}

.graph-panel, .data-panel {
  display: flex;
  flex-direction: column;
}

.graph-panel {
  flex: 426;
}

.data-panel {
  flex: 382;
}

.plot-area {
  flex: 1;
  padding: 0 12px 0 16px;
  background: #fff;
  text-align: right;
}

.plot-area span {
  display: block;
  padding-right: 2px;
  line-height: 9px;
}

.plot {
  height: 71px;
  border-right: 2px solid #000;
  position: relative;
}

.plot::before {
  content: "";
  position: absolute;
  inset: 3px 0 0;
  border: 1px solid #bbb;
}

.data-area {
  flex: 1;
  background: #a0a0a0;
}

/* Status bar */
.status {
  display: flex;
  align-items: center;
  gap: 6px;
  height: 11px;
  padding: 0 4px;
  background: #0074d0;
  color: #e6f2fc;
  font-family: Lato, "Noto Sans", sans-serif;
  font-size: 7px;
}

.ready {
  flex: 1;
}

.units::before {
  content: "▴ ";
}
```
